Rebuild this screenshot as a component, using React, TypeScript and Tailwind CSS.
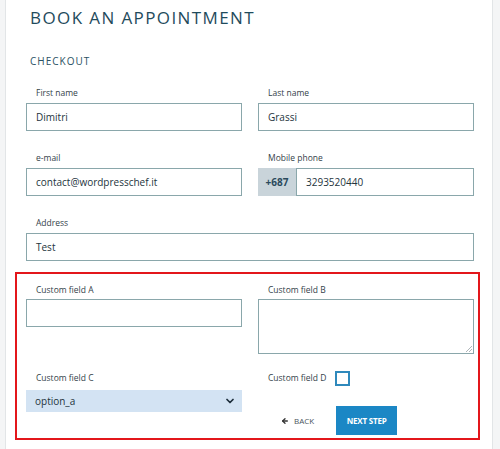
import { ArrowLeft, ChevronDown } from "lucide-react";

const font = { fontFamily: '"Open Sans", "Liberation Sans", sans-serif' };

function Label({ text }: { text: string }) {
  return <div className="h-[14px] pl-[10px] text-[8.5px] leading-[14px] text-[#34424a]">{text}</div>;
}

function TextInput({ value }: { value?: string }) {
  return (
    <div className="flex h-[28px] items-center border border-[#8aa7ab] bg-white px-[9px] text-[10px] text-[#24343d]">
      {value}
    </div>
  );
}

export default function App() {
  return (
    <div className="flex h-[449px] w-[500px] bg-[#f4f5f6]" style={font}>
      <div className="ml-[5px] w-[488px] border-l border-r border-[#e2e5e7] bg-white">
        <h1 className="pl-[24px] pt-[7px] text-[17px] leading-[22px] tracking-[1.4px] text-[#1f4b5c]">BOOK AN APPOINTMENT</h1>
        <h2 className="mt-[25px] pl-[24px] text-[10px] leading-[14px] tracking-[1px] text-[#2b5264]">CHECKOUT</h2>

        <div className="ml-[20px] mt-[18px] w-[448px]">
          <div className="grid grid-cols-2 gap-x-[16px]">
            <div>
              <Label text="First name" />
              <div className="mt-[3px]"><TextInput value="Dimitri" /></div>
            </div>
            <div>
              <Label text="Last name" />
              <div className="mt-[3px]"><TextInput value="Grassi" /></div>
            </div>
            <div className="mt-[20px]">
              <Label text="e-mail" />
              <div className="mt-[3px]"><TextInput value="contact@wordpresschef.it" /></div>
            </div>
            <div className="mt-[20px]">
              <Label text="Mobile phone" />
              <div className="mt-[3px] flex h-[28px]">
                <div className="flex w-[38px] items-center justify-center bg-[#c9d4da] text-[10px] font-bold text-[#2b4a5c]">+687</div>
                <div className="flex flex-1 items-center border border-[#8aa7ab] px-[9px] text-[10px] text-[#24343d]">3293520440</div>
              </div>
            </div>
          </div>

          <div className="mt-[20px]">
            <Label text="Address" />
            <div className="mt-[3px]"><TextInput value="Test" /></div>
          </div>

          <div className="ml-[-11px] mr-[-6px] mt-[11px] h-[168px] border-2 border-[#e3161b] pl-[9px] pr-[4px] pt-[9px]">
            <div className="grid grid-cols-2 gap-x-[16px]">
              <div>
                <Label text="Custom field A" />
                <div className="mt-[2px]"><TextInput /></div>
                <div className="mt-[44px]">
                  <Label text="Custom field C" />
                  <div className="mt-[5px] flex h-[22px] items-center justify-between bg-[#d3e3f3] pl-[9px] pr-[6px] text-[10px] text-[#24343d]">
                    <span>option_a</span>
                    <ChevronDown size={12} strokeWidth={3.5} className="text-[#1c2d3a]" />
                  </div>
                </div>
              </div>
              <div>
                <Label text="Custom field B" />
                <div className="relative mt-[2px] h-[55px] border border-[#8aa7ab]">
                  <svg className="absolute bottom-[1px] right-[1px]" width="6" height="6" viewBox="0 0 6 6">
                    <path d="M6 0L0 6M6 3L3 6" stroke="#9aa3a8" strokeWidth="0.8" />
                  </svg>
                </div>
                <div className="mt-[17px] flex items-center">
                  <span className="pl-[10px] text-[8.5px] text-[#34424a]">Custom field D</span>
                  <span className="ml-[9px] h-[15px] w-[15px] border-2 border-[#2f89bc]" />
                </div>
                <div className="mt-[20px] flex items-center">
                  <div className="ml-[23px] flex items-center gap-[5px] text-[8px] text-[#4a555c]">
                    <ArrowLeft size={8} strokeWidth={4} className="text-[#333]" />
                    <span>BACK</span>
                  </div>
                  <div className="ml-[22px] flex h-[29px] w-[61px] items-center justify-center bg-[#1b87c5] text-[8px] font-bold tracking-[-0.2px] text-white">
                    NEXT STEP
                  </div>
                </div>
              </div>
            </div>
          </div>
        </div>
      </div>
    </div>
  );
}
